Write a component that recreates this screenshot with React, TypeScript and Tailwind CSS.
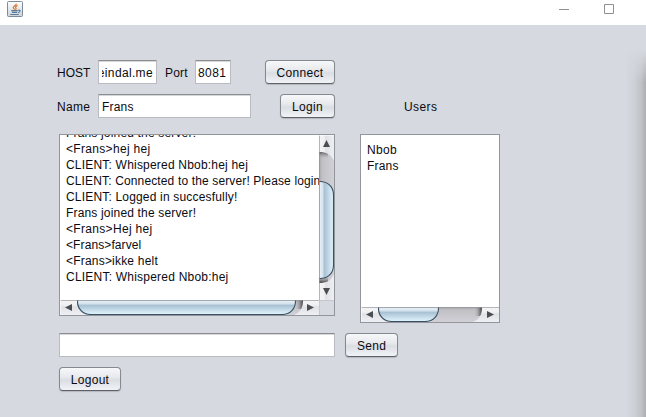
import React from "react";

type BarProps = {
  id: string;
  length: number;
  start: number;
  end: number;
  right: number;
  vertical?: boolean;
};

/* Nimbus scroll bar, drawn horizontally and transposed for the vertical one. */
function ScrollBar({ id, length, start, end, right, vertical }: BarProps) {
  const w = vertical ? 15 : length;
  const h = vertical ? length : 15;
  return (
    <svg width={w} height={h} viewBox={`0 0 ${w} ${h}`} className="block shrink-0">
      <defs>
        <linearGradient id={`${id}-thumb`} x1="0" y1="0" x2="0" y2="1">
          <stop offset="0" stopColor="#a9bccb" />
          <stop offset="0.1" stopColor="#e4edf4" />
          <stop offset="0.27" stopColor="#d3e1ec" />
          <stop offset="0.36" stopColor="#a8c0d2" />
          <stop offset="0.6" stopColor="#bdd4e3" />
          <stop offset="1" stopColor="#e2f5fd" />
        </linearGradient>
        <linearGradient id={`${id}-btn`} x1="0" y1="0" x2="0" y2="1">
          <stop offset="0" stopColor="#f4f4f5" />
          <stop offset="0.35" stopColor="#f0f0f2" />
          <stop offset="0.45" stopColor="#dfe1e5" />
          <stop offset="1" stopColor="#eff0f3" />
        </linearGradient>
        <linearGradient id={`${id}-track`} x1="0" y1="0" x2="0" y2="1">
          <stop offset="0" stopColor="#a4a4a8" />
          <stop offset="0.2" stopColor="#c0c0c5" />
          <stop offset="1" stopColor="#d0d0d6" />
        </linearGradient>
        <linearGradient id={`${id}-l`} x1="0" y1="0" x2="1" y2="0">
          <stop offset="0" stopColor="#3f3f43" />
          <stop offset="1" stopColor="#bfbfc4" stopOpacity="0" />
        </linearGradient>
        <linearGradient id={`${id}-r`} x1="1" y1="0" x2="0" y2="0">
          <stop offset="0" stopColor="#3f3f43" />
          <stop offset="1" stopColor="#bfbfc4" stopOpacity="0" />
        </linearGradient>
      </defs>
      <g transform={vertical ? "matrix(0 1 1 0 0 0)" : undefined}>
        <rect width={length} height="15" fill={`url(#${id}-track)`} />
        <rect x="16" width="8" height="9" fill={`url(#${id}-l)`} />
        <rect x={right - 8} width="8" height="9" fill={`url(#${id}-r)`} />
        <path d="M0 0H17C17 7 19 12 26 15H0Z" fill={`url(#${id}-btn)`} />
        <path
          d={`M${length} 0H${right}C${right} 7 ${right - 2} 12 ${right - 9} 15H${length}Z`}
          fill={`url(#${id}-btn)`}
        />
        <path
          d={`M${start + 0.5} 0V1C${start + 0.5} 8 ${start + 5} 14.5 ${start + 14} 14.5H${end - 14}C${end - 5} 14.5 ${end - 0.5} 8 ${end - 0.5} 1V0Z`}
          fill={`url(#${id}-thumb)`}
        />
        <path
          d={`M${start + 0.5} 0V1C${start + 0.5} 8 ${start + 5} 14.5 ${start + 14} 14.5H${end - 14}C${end - 5} 14.5 ${end - 0.5} 8 ${end - 0.5} 1V0`}
          fill="none"
          stroke="#3a5163"
          strokeWidth="1.1"
        />
        <path d={`M0 0.5H${length}`} stroke="#8f949a" strokeOpacity="0.65" />
        <path d="M0.5 0V15" stroke="#fff" strokeOpacity="0.6" />
        <path d="M5 7.5L12 4V11Z" fill="#4a4d51" />
        <path d={`M${length - 5} 7.5L${length - 12} 4V11Z`} fill="#4a4d51" />
      </g>
    </svg>
  );
}

function Button({ children, className }: { children: string; className: string }) {
  return (
    <button
      className={`h-6 shrink-0 rounded-[4px] border border-[#868a90] border-b-[#5d6166] bg-[linear-gradient(180deg,#f7f8fa_0%,#e7e9ec_42%,#dadde2_55%,#f1f3f7_100%)] pt-px text-center leading-[23px] tracking-[0.3px] shadow-[0_1px_1px_rgba(120,124,132,0.35)] ${className}`}
    >
      {children}
    </button>
  );
}

function Field({ children, className }: { children?: React.ReactNode; className: string }) {
  return (
    <div
      className={`flex h-6 shrink-0 items-center overflow-hidden border border-[#b8bbc1] border-t-[#8b8d91] bg-white pl-[3px] pt-px shadow-[inset_0_1px_0_#d6d7d9] ${className}`}
    >
      {children}
    </div>
  );
}

function JavaIcon() {
  return (
    <svg width="16" height="16" viewBox="0 0 16 16">
      <defs>
        <linearGradient id="java-bg" x1="0" y1="0" x2="0" y2="1">
          <stop offset="0" stopColor="#ffffff" />
          <stop offset="1" stopColor="#cbd3d9" />
        </linearGradient>
      </defs>
      <rect x="0.5" y="0.5" width="15" height="15" rx="1" fill="url(#java-bg)" stroke="#7e8b96" />
      <path d="M9.3 2.6C9.5 4.4 6.2 4.9 6.3 6.5C6.4 7.6 7.7 7.8 7.5 8.8M10.6 4.3C8.7 5.2 8.1 6 8.9 7C9.4 7.7 9 8.3 8.5 8.7" fill="none" stroke="#df7b35" strokeWidth="1.3" />
      <path d="M4.2 9.7H10.8M5 11.4H10.1M3.3 13.5H11.8M11.2 9.3C13.9 8.7 13.7 11.1 11 11.7" fill="none" stroke="#5b7c9a" strokeWidth="1.2" />
    </svg>
  );
}

const messages = [
  { text: "Frans joined the server!", tracking: "tracking-[0.17px]" },
  { text: "<Frans>hej hej", tracking: "tracking-[0.32px]" },
  { text: "CLIENT: Whispered Nbob:hej hej", tracking: "tracking-[0.2px]" },
  { text: "CLIENT: Connected to the server! Please login", tracking: "tracking-[0.14px]" },
  { text: "CLIENT: Logged in succesfully!", tracking: "tracking-[0.18px]" },
  { text: "Frans joined the server!", tracking: "tracking-[0.17px]" },
  { text: "<Frans>Hej hej", tracking: "tracking-[0.32px]" },
  { text: "<Frans>farvel", tracking: "tracking-[0.1px]" },
  { text: "<Frans>ikke helt", tracking: "tracking-[0.2px]" },
  { text: "CLIENT: Whispered Nbob:hej", tracking: "tracking-[0.22px]" },
];

export default function App() {
  return (
    <div className="relative flex h-[417px] w-[646px] flex-col overflow-hidden bg-[#d6d9e0] font-['Liberation_Sans',Arial,sans-serif] text-[12px] leading-4 text-[#0b0b12]">
      <header className="flex h-[25px] shrink-0 items-start bg-white pl-[7px] pt-px">
        <JavaIcon />
        <svg width="60" height="16" viewBox="0 0 60 16" className="ml-auto mr-[29px]">
          <path d="M2 8.5H12M47.5 3.5H56.5V12.5H47.5Z" fill="none" stroke="#8f8f8f" />
        </svg>
      </header>

      <main className="flex flex-1 flex-col pl-[57px] pt-[35px]">
        <div className="flex h-6 items-center">
          <label className="w-[41px] pt-px">HOST</label>
          <Field className="w-[59px]">
            <div className="flex w-[51px] shrink-0 justify-end overflow-hidden whitespace-nowrap tracking-[0.35px]">
              <span>eindal.me</span>
            </div>
          </Field>
          <label className="ml-2 w-[30px] pt-px tracking-[0.2px]">Port</label>
          <Field className="w-9 tracking-[0.4px]">
            <span className="-ml-px">8081</span>
          </Field>
          <Button className="ml-[34px] w-[70px]">Connect</Button>
        </div>

        <div className="mt-2.5 flex h-6 items-center">
          <label className="w-[41px] pt-px tracking-[0.3px]">Name</label>
          <Field className="w-[153px] tracking-[0.2px]">Frans</Field>
          <Button className="ml-[29px] w-[55px]">Login</Button>
          <span className="ml-[69px] pt-px tracking-[0.4px]">Users</span>
        </div>

        <div className="ml-0.5 mt-4 flex h-[189px] items-start gap-[25px]">
          <section className="grid h-[182px] w-[276px] grid-cols-[259px_15px] grid-rows-[165px_15px] border border-[#92959c]">
            <div className="flex flex-col justify-end overflow-hidden bg-white pb-[15px] pl-1.5">
              {messages.map((m, i) => (
                <p key={i} className={`h-4 shrink-0 whitespace-nowrap ${m.tracking}`}>
                  {m.text}
                </p>
              ))}
            </div>
            <ScrollBar id="cv" length={165} start={46} end={144} right={148} vertical />
            <ScrollBar id="ch" length={259} start={17} end={236} right={243} />
            <div className="border-l border-t border-[#c4c7cd]" />
          </section>
          <section className="flex h-[189px] w-[140px] flex-col border border-[#92959c]">
            <div className="flex-1 bg-white pl-1.5 pt-[7px]">
              <p className="tracking-[0.3px]">Nbob</p>
              <p className="tracking-[0.2px]">Frans</p>
            </div>
            <ScrollBar id="uh" length={138} start={17} end={78} right={121} />
          </section>
        </div>

        <div className="ml-0.5 mt-2.5 flex gap-2.5">
          <Field className="w-[276px]" />
          <Button className="w-[53px]">Send</Button>
        </div>
        <Button className="ml-0.5 mt-2.5 w-[62px]">Logout</Button>
      </main>

      <div className="absolute bottom-0 right-0 top-[50px] w-5 bg-[linear-gradient(90deg,transparent_0%,#cdd0d5_40%,#c1c3c7_75%,#acadb0_100%)] [mask-image:linear-gradient(180deg,transparent,black_32px)]" />
    </div>
  );
}
